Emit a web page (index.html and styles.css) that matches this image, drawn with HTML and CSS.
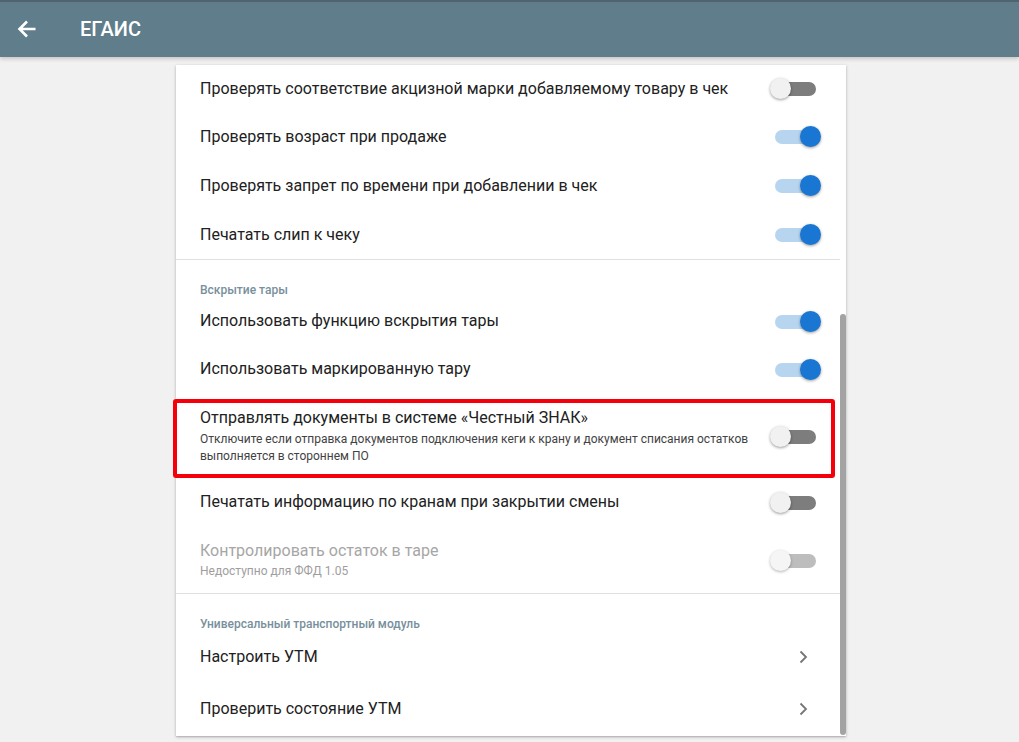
FILE: index.html
```html
<!DOCTYPE html>
<html lang="ru">
<head>
<meta charset="utf-8">
<title>ЕГАИС</title>
<link rel="stylesheet" href="styles.css">
</head>
<body>
<header class="appbar">
  <span class="back">
    <svg width="20" height="20" viewBox="0 0 20 20"><path d="M18.5 10H3M10 2.5L2.5 10L10 17.5" fill="none" stroke="#fff" stroke-width="2.6" stroke-linecap="butt" stroke-linejoin="miter"/></svg>
  </span>
  <h1 class="title">ЕГАИС</h1>
</header>
<main class="page">
  <section class="card">
    <div class="content">
      <div class="row first">
        <span class="label">Проверять соответствие акцизной марки добавляемому товару в чек</span>
        <span class="switch"><span class="track"></span><span class="thumb"></span></span>
      </div>
      <div class="row">
        <span class="label">Проверять возраст при продаже</span>
        <span class="switch on"><span class="track"></span><span class="thumb"></span></span>
      </div>
      <div class="row">
        <span class="label">Проверять запрет по времени при добавлении в чек</span>
        <span class="switch on"><span class="track"></span><span class="thumb"></span></span>
      </div>
      <div class="row">
        <span class="label">Печатать слип к чеку</span>
        <span class="switch on"><span class="track"></span><span class="thumb"></span></span>
      </div>
      <div class="divider"></div>
      <div class="subheader">Вскрытие тары</div>
      <div class="row r48">
        <span class="label">Использовать функцию вскрытия тары</span>
        <span class="switch on"><span class="track"></span><span class="thumb"></span></span>
      </div>
      <div class="row r48">
        <span class="label">Использовать маркированную тару</span>
        <span class="switch on"><span class="track"></span><span class="thumb"></span></span>
      </div>
      <div class="row multi highlighted">
        <div class="texts">
          <div class="label">Отправлять документы в системе «Честный ЗНАК»</div>
          <div class="hint">Отключите если отправка документов подключения кеги к крану и документ списания остатков выполняется в стороннем ПО</div>
        </div>
        <span class="switch"><span class="track"></span><span class="thumb"></span></span>
      </div>
      <div class="row r48">
        <span class="label">Печатать информацию по кранам при закрытии смены</span>
        <span class="switch"><span class="track"></span><span class="thumb"></span></span>
      </div>
      <div class="row multi disabled">
        <div class="texts">
          <div class="label">Контролировать остаток в таре</div>
          <div class="hint">Недоступно для ФФД 1.05</div>
        </div>
        <span class="switch"><span class="track"></span><span class="thumb"></span></span>
      </div>
      <div class="divider"></div>
      <div class="subheader">Универсальный транспортный модуль</div>
      <div class="row nav">
        <span class="label">Настроить УТМ</span>
        <svg class="chev" width="10" height="14" viewBox="0 0 10 14"><path d="M2.5 1.5L8 7L2.5 12.5" fill="none" stroke="#757575" stroke-width="1.8"/></svg>
      </div>
      <div class="row nav">
        <span class="label">Проверить состояние УТМ</span>
        <svg class="chev" width="10" height="14" viewBox="0 0 10 14"><path d="M2.5 1.5L8 7L2.5 12.5" fill="none" stroke="#757575" stroke-width="1.8"/></svg>
      </div>
    </div>
    <div class="scrollbar"><div class="scroll-thumb"></div></div>
  </section>
</main>
</body>
</html>
```
FILE: styles.css
```css
* { box-sizing: border-box; }
html, body { margin: 0; padding: 0; }
body {
  background: #f1f1f1;
  font-family: Roboto, "Noto Sans", Arial, sans-serif;
  color: #212121;
  height: 742px;
  overflow: hidden;
}
.appbar {
  height: 57px;
  background: #607d8b;
  border-top: 2px solid #4e6570;
  display: flex;
  align-items: center;
  box-shadow: 0 2px 4px rgba(0,0,0,0.18);
  position: relative;
  z-index: 2;
}
.back {
  width: 20px;
  height: 20px;
  margin-left: 17px;
  margin-top: -1px;
  display: flex;
}
.title {
  margin: -1px 0 0 43px;
  color: #fff;
  font-size: 20px;
  font-weight: 500;
}
.page {
  padding-top: 8px;
  padding-left: 176px;
}
.card {
  width: 670px;
  height: 671px;
  background: #fff;
  box-shadow: 0 1px 3px rgba(0,0,0,0.25), 0 1px 1px rgba(0,0,0,0.08);
  display: flex;
}
.content {
  flex: 1;
  min-width: 0;
}
.scrollbar {
  width: 6px;
  padding-top: 249px;
  padding-bottom: 1px;
  display: flex;
  flex-direction: column;
}
.scroll-thumb {
  flex: 1;
  background: #a3a3a3;
  border-radius: 3px;
}
.row {
  height: 49px;
  display: flex;
  align-items: center;
  padding: 0 20px 0 24px;
  position: relative;
}
.row.first { height: 47px; }
.row.r48 { height: 48px; }
.label {
  font-size: 16px;
  line-height: 22px;
  color: #212121;
  flex: 1;
}
.row.highlighted { height: 85px; padding-top: 1px; }
.row.disabled { height: 67px; padding-top: 1px; }
.texts { flex: 1; }
.hint {
  font-size: 12px;
  line-height: 17px;
  color: #424242;
  margin-top: 2px;
}
.row.disabled .label { color: #a6a6a6; }
.row.disabled .hint { color: #9e9e9e; line-height: 18px; margin-top: 0; }
.highlighted::after {
  content: "";
  position: absolute;
  left: -3px;
  right: 5px;
  top: 6px;
  bottom: 0;
  border: 4px solid #f5000a;
  border-radius: 3px;
  pointer-events: none;
}
.divider {
  height: 1px;
  background: #e0e0e0;
}
.subheader {
  font-size: 12px;
  line-height: 14px;
  font-weight: 500;
  color: #78909c;
  padding: 23px 24px 0;
  height: 37px;
}
.row.nav { height: 52px; padding-right: 32px; }
.chev { flex: none; }
.switch {
  position: relative;
  width: 51px;
  height: 21px;
  flex: none;
  margin-left: 16px;
  margin-right: -1px;
}
.track {
  position: absolute;
  left: 5px;
  top: 4px;
  width: 41px;
  height: 14px;
  border-radius: 7px;
  background: #7d7d7d;
}
.thumb {
  position: absolute;
  left: 0;
  top: 0;
  width: 21px;
  height: 21px;
  border-radius: 50%;
  background: #f1f1f1;
  box-shadow: 0 1px 3px rgba(0,0,0,0.4);
}
.switch.on .track { background: #b8d5f0; }
.switch.on .thumb { left: 30px; background: #1976d2; }
.row.disabled .track { background: #bdbdbd; }
.row.disabled .thumb { background: #f5f5f5; box-shadow: 0 1px 3px rgba(0,0,0,0.3); }
```
